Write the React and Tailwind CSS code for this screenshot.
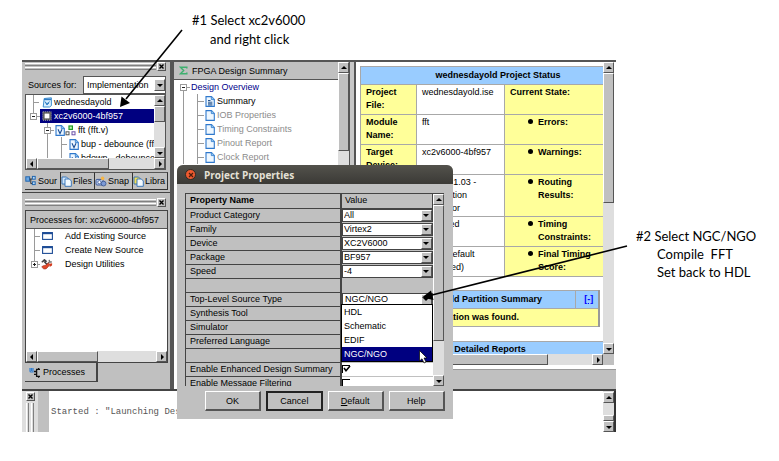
import { useState } from "react";
import clsx from "clsx";

const raised =
  "border border-t-white border-l-white border-b-[#555555] border-r-[#555555] bg-[#c0c0c0]";

const ARROWS = {
  up: "M1 5 L4 2 L7 5 Z",
  down: "M1 3 L4 6 L7 3 Z",
  left: "M5 1 L2 4 L5 7 Z",
  right: "M3 1 L6 4 L3 7 Z",
};

const ArrowButton = ({ dir, className }) => (
  <button
    type="button"
    aria-label={`Scroll ${dir}`}
    className={clsx(
      "flex size-[11px] shrink-0 items-center justify-center",
      raised,
      className,
    )}
  >
    <svg viewBox="0 0 8 8" className="size-2">
      <path d={ARROWS[dir]} fill="#000" />
    </svg>
  </button>
);

const VScroll = ({ thumb, className }) => (
  <div className={clsx("flex w-[11px] shrink-0 flex-col bg-[#dedede]", className)}>
    <ArrowButton dir="up" />
    <div className="flex min-h-0 flex-1 flex-col">
      <div className={clsx(raised, thumb)} />
    </div>
    <ArrowButton dir="down" />
  </div>
);

const HScroll = ({ thumb }) => (
  <div className="flex h-[11px] shrink-0 bg-[#dedede]">
    <ArrowButton dir="left" />
    <div className="flex flex-1">
      <div className={clsx(raised, thumb)} />
    </div>
    <ArrowButton dir="right" />
  </div>
);

const CloseBox = () => (
  <button
    type="button"
    aria-label="Close panel"
    className={clsx("flex size-[9px] shrink-0 items-center justify-center", raised)}
  >
    <svg viewBox="0 0 7 7" className="size-[7px]">
      <path d="M1.5 1.5 L5.5 5.5 M5.5 1.5 L1.5 5.5" stroke="#000" strokeWidth="1.4" />
    </svg>
  </button>
);

const Grip = () => (
  <div className="flex h-[9px] items-center gap-px pr-1">
    <div className="flex flex-1 flex-col gap-px">
      <div className="h-[3px] border-t border-b border-t-white border-b-[#808080]" />
      <div className="h-[3px] border-t border-b border-t-white border-b-[#808080]" />
    </div>
    <CloseBox />
  </div>
);

/* ---------- icons ---------- */

const PageIcon = ({ letter, lines }) => (
  <svg viewBox="0 0 10 11" className="h-[11px] w-[10px] shrink-0">
    <path d="M1 .6 H6.5 L9.3 3.4 V10.4 H1 Z" fill="#eef7ff" stroke="#2f78cc" strokeWidth="1.1" />
    <path d="M6.3 .6 V3.6 H9.3" fill="#8cc4ee" stroke="#2f78cc" strokeWidth=".8" />
    {letter && <path d="M3 4.3 L5 8.6 L7 4.3" fill="none" stroke="#1c4f96" strokeWidth="1.1" />}
    {lines && <path d="M3 4.5 H5.5 M3 6.2 H7.4 M3 7.8 H7.4 M3 9 H7.4" stroke="#29568e" strokeWidth="1" />}
  </svg>
);

const ProjectIcon = () => (
  <svg viewBox="0 0 10 11" className="h-[11px] w-[10px] shrink-0">
    <path d="M2.2 1.5 L9.4 .8 V8.6 L7.6 10 H1.2 Z" fill="#d9efff" stroke="#3f8ed0" />
    <path d="M2 2.4 H9" stroke="#2f7cc4" strokeWidth="1.6" />
    <path d="M3 4.5 L5 8 L7.4 4.5 M4 6.3 H7" fill="none" stroke="#2f7cc4" />
  </svg>
);

const ChipIcon = () => (
  <svg viewBox="0 0 10 10" className="size-[10px] shrink-0">
    <rect x=".8" y=".8" width="8.4" height="8.4" fill="#555" stroke="#aaa" strokeDasharray="1 1" />
    <rect x="2.6" y="2.6" width="4.8" height="4.8" fill="#fff" />
  </svg>
);

const HierarchyIcon = () => (
  <svg viewBox="0 0 11 11" className="size-[11px] shrink-0" fill="none">
    <rect x="4" y="1" width="3.4" height="3.4" fill="#bdf5b0" stroke="#1f9a23" strokeWidth="1.2" />
    <rect x="1" y="6.8" width="3" height="3" stroke="#555" />
    <rect x="7" y="6.8" width="3" height="3" stroke="#6b4fa8" />
  </svg>
);

const WindowIcon = () => (
  <svg viewBox="0 0 11 8" className="h-2 w-[11px] shrink-0">
    <rect x=".6" y=".6" width="9.8" height="6.8" fill="#fff" stroke="#1d4c96" strokeWidth="1.1" />
    <path d="M.6 1.3 H10.4" stroke="#1d4c96" strokeWidth="1.8" />
  </svg>
);

const ToolsIcon = () => (
  <svg viewBox="0 0 12 11" className="h-[11px] w-3 shrink-0">
    <path d="M.8 3.2 L3.4 .8 L5 2.2 L3.6 3 L6 5.4" fill="none" stroke="#444" strokeWidth="1.5" />
    <path d="M8.2 .8 L8.6 2.8 L10.8 3 M8.6 2.8 L6.4 5" fill="none" stroke="#777" strokeWidth="1.4" />
    <path d="M1 7.6 C1.4 6.6 3.4 6.6 4.6 6.2 L7.4 4 L9 5.6 L6 9 C5 10.4 1.4 10.6 1 7.6 Z" fill="#e2492a" stroke="#96230f" strokeWidth=".6" />
    <path d="M8.6 4.8 L11.2 4.2 L11 6.4 L8.6 8 Z" fill="#d23c20" />
  </svg>
);

const SourcesIcon = () => (
  <svg viewBox="0 0 12 11" className="h-[11px] w-3 shrink-0" fill="none">
    <rect x=".8" y="1.8" width="3.8" height="4.4" fill="#6aa8e6" stroke="#2366ae" />
    <path d="M4.6 4 H7 M5.8 4 V8.6 H7" stroke="#333" />
    <rect x="7.4" y="1.4" width="2.8" height="2.8" fill="#b8daf7" stroke="#2366ae" />
    <rect x="7.4" y="6.8" width="2.8" height="2.8" fill="#b8daf7" stroke="#2366ae" />
  </svg>
);

const StackIcon = ({ fill }) => (
  <svg viewBox="0 0 11 11" className="size-[11px] shrink-0">
    <path d="M1 1 H5.5 L7 2.5 V8 H1 Z" fill={fill} stroke="#2c6db4" strokeWidth=".9" />
    <path d="M4 3 H8.4 L10.3 5 V10.3 H4 Z" fill="#f3faff" stroke="#2c6db4" strokeWidth=".9" />
  </svg>
);

const SnapIcon = () => (
  <svg viewBox="0 0 12 11" className="h-[11px] w-3 shrink-0">
    <rect x="1" y="3.4" width="7" height="5.6" rx="1" fill="#b7c9ea" stroke="#3c5a9c" />
    <circle cx="4.4" cy="6.2" r="1.6" fill="#fff" stroke="#3c5a9c" strokeWidth=".8" />
    <circle cx="8.6" cy="7.6" r="2.4" fill="#7c9ad6" stroke="#35528e" strokeWidth=".8" />
    <circle cx="7.6" cy="2.4" r="1.8" fill="#f6b545" />
  </svg>
);

const ProcessIcon = () => (
  <svg viewBox="0 0 12 11" className="h-[11px] w-3 shrink-0" fill="none">
    <path d="M1 1 V4 Q1 5 2 5 H4 V1 M2.5 1 V4" stroke="#2f7dd0" strokeWidth="1.2" />
    <path d="M11 2.4 H7.6 V9.4 H11 M5 4.5 H7.6 M5 7.4 H7.6 M9.6 1 V2.4 M9.6 9.4 V10.8" stroke="#111" strokeWidth="1.3" />
  </svg>
);

const SigmaIcon = () => (
  <svg viewBox="0 0 9 9" className="size-[9px] shrink-0" fill="none">
    <path d="M7.8 2.6 V1.2 H1.4 L4.6 4.5 L1.4 7.8 H7.8 V6.4" stroke="#3fb070" strokeWidth="1.5" />
  </svg>
);

// guide lines of one tree row, 14px high; box is the x of an expander
const Guides = ({ width, d, box, plus }) => (
  <svg width={width} height="14" className="shrink-0" fill="none">
    <path d={d} stroke="#9a9a9a" />
    {box !== undefined && (
      <>
        <rect x={box - 3} y="4.5" width="6" height="6" fill="#fff" stroke="#9a9a9a" />
        <path d={`M${box - 1.5} 7.5 h3`} stroke="#222" />
        {plus && <path d={`M${box} 6 v3`} stroke="#222" />}
      </>
    )}
  </svg>
);

const Row = ({ guides, children, className }) => (
  <li className="flex h-[14px] shrink-0 items-center whitespace-nowrap">
    <Guides {...guides} />
    <span className={clsx("flex h-[14px] flex-1 items-center gap-0.5", className)}>
      {children}
    </span>
  </li>
);

/* ---------- left column ---------- */

const tabs = [
  { label: "Sour", icon: <SourcesIcon />, width: "w-9", active: true },
  { label: "Files", icon: <StackIcon fill="#cfe6fb" />, width: "w-[34px]" },
  { label: "Snap", icon: <SnapIcon />, width: "w-[38px]" },
  { label: "Libra", icon: <StackIcon fill="#f5df57" />, width: "w-[35px]" },
];

const SourcesPanel = () => (
  <section className="flex h-[131px] flex-col border-b border-[#444444] pl-[3px]">
    <Grip />
    <div className="mt-1 flex h-[19px] items-center pl-[3px]">
      <label htmlFor="sources" className="w-[55px] shrink-0">
        Sources for:
      </label>
      <div className="relative mr-1 flex h-[18px] flex-1 border border-[#555555] bg-white">
        <select id="sources" className="w-full appearance-none pl-[3px] outline-none">
          <option>Implementation</option>
        </select>
        <ArrowButton dir="down" className="pointer-events-none absolute top-0.5 right-0 h-3" />
      </div>
    </div>
    <div className="mr-1 flex h-[76px] flex-col border border-[#555555] bg-white">
      <div className="flex min-h-0 flex-1">
        <ul className="min-w-0 flex-1 overflow-hidden">
          <Row guides={{ width: 16, d: "M7.5 0 V14 M7.5 7.5 H13" }}>
            <ProjectIcon /> wednesdayold
          </Row>
          <Row
            guides={{ width: 14, d: "M7.5 0 V7 M7.5 7.5 H14", box: 7.5 }}
            className="bg-[#000080] pl-0.5 text-white"
          >
            <ChipIcon /> xc2v6000-4bf957
          </Row>
          <Row guides={{ width: 29, d: "M21.5 0 V14 M21.5 7.5 H28", box: 21.5 }}>
            <span className="flex">
              <PageIcon letter />
              <HierarchyIcon />
            </span>
            fft (fft.v)
          </Row>
          <Row guides={{ width: 43, d: "M21.5 0 V14 M35.5 0 V14 M35.5 7.5 H41" }}>
            <PageIcon letter /> bup - debounce (ff
          </Row>
          <Row guides={{ width: 43, d: "M21.5 0 V14 M35.5 0 V14 M35.5 7.5 H41" }}>
            <PageIcon letter /> bdown - debounce
          </Row>
        </ul>
        <VScroll thumb="h-4" />
      </div>
      <HScroll thumb="w-[72px]" />
    </div>
    <div className="mt-0.5 mr-0.5 flex h-[18px]" role="tablist">
      {tabs.map((tab) => (
        <button
          key={tab.label}
          type="button"
          role="tab"
          aria-selected={!!tab.active}
          className={clsx(
            "flex h-full shrink-0 items-center gap-px border-r border-b border-[#333333]",
            tab.width,
            !tab.active && "border-t border-t-[#555555]",
          )}
        >
          {tab.icon}
          {tab.label}
        </button>
      ))}
    </div>
  </section>
);

const ProcessesPanel = () => (
  <section className="flex flex-1 flex-col pt-[5px] pl-[3px]">
    <Grip />
    <div className="mt-[3px] mr-0.5 flex h-[153px] flex-col border border-[#444444] bg-white">
      <h2 className="flex h-[18px] items-center border-b border-[#555555] bg-[#c0c0c0] pl-1 whitespace-nowrap">
        Processes for: xc2v6000-4bf957
      </h2>
      <ul className="flex-1">
        <Row guides={{ width: 16, d: "M8.5 0 V14 M8.5 7.5 H14" }} className="gap-3">
          <WindowIcon /> Add Existing Source
        </Row>
        <Row guides={{ width: 16, d: "M8.5 0 V14 M8.5 7.5 H14" }} className="gap-3">
          <WindowIcon /> Create New Source
        </Row>
        <Row guides={{ width: 15, d: "M8.5 0 V7 M8.5 7.5 H14", box: 8.5, plus: true }} className="gap-3">
          <ToolsIcon /> Design Utilities
        </Row>
      </ul>
      <HScroll thumb="w-[61px]" />
    </div>
    <div>
      <button
        type="button"
        className="flex h-[19px] w-[73px] items-center gap-0.5 border-r-2 border-b border-[#444444] pl-1"
      >
        <ProcessIcon />
        Processes
      </button>
    </div>
  </section>
);

/* ---------- summary tree ---------- */

const reports = ["IOB Properties", "Timing Constraints", "Pinout Report", "Clock Report"];

const SummaryTree = () => (
  <section className="flex w-[180px] shrink-0 border-r border-l-4 border-[#555555] bg-white">
    <div className="min-w-0 flex-1">
      <h2 className="flex h-[18px] items-center gap-1 border-b border-[#555555] bg-[#c0c0c0] pl-[5px]">
        <SigmaIcon /> FPGA Design Summary
      </h2>
      <ul className="text-[#8c8c8c]">
        <Row guides={{ width: 17, d: "M9.5 7 V14 M10 7.5 H16", box: 9.5 }} className="text-[#00008b]">
          Design Overview
        </Row>
        <Row guides={{ width: 31, d: "M9.5 0 V14 M23.5 0 V14 M23.5 7.5 H30" }} className="text-black">
          <PageIcon lines /> Summary
        </Row>
        {reports.map((name) => (
          <Row key={name} guides={{ width: 31, d: "M9.5 0 V14 M23.5 0 V14 M23.5 7.5 H30" }}>
            <PageIcon /> {name}
          </Row>
        ))}
      </ul>
    </div>
    <VScroll thumb="h-[78px]" />
  </section>
);

/* ---------- report ---------- */

const status = [
  ["Project File:", "wednesdayold.ise", "Current State:"],
  ["Module Name:", "fft", "Errors:"],
  ["Target Device:", "xc2v6000-4bf957", "Warnings:"],
  ["Product Version:", "ISE, 11.1.03 - Foundation Simulator", "Routing Results:"],
  ["Design Goal:", "Balanced", "Timing Constraints:"],
  ["Design Strategy:", "Xilinx Default (unlocked)", "Final Timing Score:"],
];

const cell = "border border-[#a8a8a8] py-px pr-0.5 pl-[5px] align-top";

const Report = () => (
  <section className="flex min-w-0 flex-1 flex-col border-l-2 border-[#555555] bg-white">
    <div className="flex h-[292px]">
      <div className="min-w-0 flex-1 overflow-hidden pt-1 pl-1 leading-[13px]">
        <table className="w-[276px] table-fixed border-collapse">
          <colgroup>
            <col className="w-14" />
            <col className="w-[88px]" />
            <col />
          </colgroup>
          <thead>
            <tr className="h-[18px] bg-[#99ccff]">
              <th colSpan={3} className="border border-[#a8a8a8]">
                wednesdayold Project Status
              </th>
            </tr>
          </thead>
          <tbody>
            {status.map(([name, value, label], i) => (
              <tr key={name} className="h-[30px]">
                <th className={clsx(cell, "bg-[#ffff99] text-left")}>{name}</th>
                <td className={cell}>{value}</td>
                <td className={clsx(cell, "bg-[#ffff99] font-bold")}>
                  {i === 0 ? (
                    label
                  ) : (
                    <ul className="w-[90px] pl-[18px]">
                      <li className="flex gap-[5px] before:mt-[3px] before:size-[5px] before:shrink-0 before:rounded-full before:bg-black">
                        {label}
                      </li>
                    </ul>
                  )}
                </td>
              </tr>
            ))}
          </tbody>
        </table>

        <table className="mt-[13px] w-[240px] border-collapse border-r-2 border-r-[#999999]">
          <tbody>
            <tr className="h-[18px] bg-[#99ccff]">
              <th className="border border-[#a8a8a8] pl-1">wednesdayold Partition Summary</th>
              <th className="w-6 border border-[#a8a8a8] pl-1">
                <a href="#partition" className="text-[#0000ff] underline">
                  [-]
                </a>
              </th>
            </tr>
            <tr className="h-[18px] bg-[#ffff99]">
              <td colSpan={2} className="border border-[#a8a8a8] px-1.5 font-bold">
                No partition information was found.
              </td>
            </tr>
          </tbody>
        </table>

        <h3 className="mt-[14px] h-[18px] w-[260px] border border-[#a8a8a8] bg-[#99ccff] pt-px text-center font-bold">
          Detailed Reports
        </h3>
      </div>
      <VScroll thumb="h-[130px]" className="mr-0.5" />
    </div>
    <div className="flex pr-0.5">
      <div className="flex-1">
        <HScroll thumb="w-[181px]" />
      </div>
      <div className="w-[11px] bg-[#c0c0c0]" />
    </div>
    <div className="mt-1 flex-1 border-t border-[#999999] bg-[#c0c0c0]" />
  </section>
);

/* ---------- console ---------- */

const Console = () => (
  <section className="flex h-[43px] border-t-2 border-[#444444] bg-white">
    <div className="flex w-4 flex-col items-center bg-[#dedede] pt-px">
      <CloseBox />
      <div className="mt-0.5 flex flex-1 gap-0.5">
        <div className="w-[3px] border-r border-l border-r-[#808080] border-l-white" />
        <div className="w-[3px] border-r border-l border-r-[#808080] border-l-white" />
      </div>
    </div>
    <div className="w-[11px] bg-[#c0c0c0]" />
    <p className="flex-1 pt-[15px] pl-0.5 font-['Liberation_Mono',monospace] text-[#555555]">
      Started : "Launching Design Summary".
    </p>
    <div className="flex border-r-2 border-[#333333]">
      <div className="flex w-[11px] flex-col bg-[#dedede] pt-px">
        <ArrowButton dir="up" />
        <div className="flex-1" />
        <div className={clsx("h-1.5", raised)} />
        <ArrowButton dir="down" />
      </div>
    </div>
  </section>
);

/* ---------- dialog ---------- */

const properties = [
  { name: "Product Category", value: "All" },
  { name: "Family", value: "Virtex2" },
  { name: "Device", value: "XC2V6000" },
  { name: "Package", value: "BF957" },
  { name: "Speed", value: "-4" },
  { name: "" },
  { name: "Top-Level Source Type", value: "NGC/NGO" },
  { name: "Synthesis Tool" },
  { name: "Simulator" },
  { name: "Preferred Language" },
  { name: "" },
  { name: "Enable Enhanced Design Summary", check: true },
  { name: "Enable Message Filtering", check: false },
];

const sourceTypes = ["HDL", "Schematic", "EDIF", "NGC/NGO"];

const PropertyValue = ({ prop }) => {
  const [checked, setChecked] = useState(prop.check);

  if (prop.value) {
    return (
      <div className="relative flex h-[13px] border border-[#444444] bg-white">
        <select
          aria-label={prop.name}
          className={clsx(
            "w-full appearance-none leading-[11px] outline-none",
            prop.value === "NGC/NGO" ? "pl-0.5" : "pl-px",
          )}
        >
          <option>{prop.value}</option>
        </select>
        <ArrowButton dir="down" className="pointer-events-none absolute top-0 right-0" />
      </div>
    );
  }
  if (prop.check !== undefined) {
    return (
      <label className="flex h-[13px] items-center bg-white">
        <input
          type="checkbox"
          aria-label={prop.name}
          checked={checked}
          onChange={(e) => setChecked(e.target.checked)}
          className="peer size-2 appearance-none border-t border-l border-black"
        />
        <svg viewBox="0 0 8 8" className="-ml-[7px] hidden size-2 peer-checked:block">
          <path d="M1 3 L3 5.8 L7 1" fill="none" stroke="#000" strokeWidth="1.6" />
        </svg>
      </label>
    );
  }
  return null;
};

const Dialog = () => (
  <div
    role="dialog"
    aria-label="Project Properties"
    className="absolute top-[165px] left-[177px] z-10 w-[276px] rounded-t-md bg-[#c0c0c0]"
  >
    <div className="flex h-[19px] items-center gap-2 rounded-t-md bg-linear-to-b from-[#53524c] to-[#3b3a36] pl-2">
      <button
        type="button"
        aria-label="Close"
        className="flex size-[11px] items-center justify-center rounded-full border border-[#2f2a26] bg-[#ee5a2f]"
      >
        <svg viewBox="0 0 6 6" className="size-1.5">
          <path d="M1 1 L5 5 M5 1 L1 5" stroke="#4a1c0c" strokeWidth="1.2" />
        </svg>
      </button>
      <h2 className="font-['Open_Sans',sans-serif] text-[10px] font-bold text-[#e4e0d6]">
        Project Properties
      </h2>
    </div>

    <div className="mt-[9px] mr-[9px] ml-2 flex h-[193px] border-t border-l border-[#444444]">
      <div className="relative min-w-0 flex-1">
        <div className="h-48 overflow-hidden">
          <table className="w-full table-fixed border-collapse">
            <thead>
              <tr className="h-[14px]">
                <th className="w-[155px] border-r-2 border-b border-[#444444] p-0 pl-1 text-left leading-[13px]">
                  Property Name
                </th>
                <th className="border-r border-b border-[#444444] p-0 pl-[3px] text-left leading-[13px] font-normal">
                  Value
                </th>
              </tr>
            </thead>
            <tbody>
              {properties.map((prop, i) => (
                <tr key={i} className="h-[14px]">
                  <td className="border-r-2 border-b border-[#444444] p-0 pl-1 leading-[13px] whitespace-nowrap">
                    {prop.name}
                  </td>
                  <td className="p-0">
                    <PropertyValue prop={prop} />
                  </td>
                </tr>
              ))}
            </tbody>
          </table>
        </div>
        {/* open source type list */}
        <ul
          role="listbox"
          aria-label="Top-Level Source Type"
          className="absolute top-[110px] right-0 w-[92px] border border-black bg-white"
        >
          {sourceTypes.map((type) => (
            <li
              key={type}
              role="option"
              aria-selected={type === "NGC/NGO"}
              className="h-[14px] pl-0.5 leading-[14px] aria-selected:bg-[#000080] aria-selected:text-white"
            >
              {type}
            </li>
          ))}
        </ul>
      </div>
      <VScroll thumb="h-[136px]" />
    </div>

    <div className="mt-[5px] mr-2 ml-7 grid grid-cols-4 gap-[5px] pb-2">
      <button type="button" className={clsx("h-5 border-r-2 border-b-2", raised)}>
        OK
      </button>
      <button type="button" className="h-5 border-2 border-[#222222]">
        Cancel
      </button>
      <button type="button" className={clsx("h-5 border-r-2 border-b-2", raised)}>
        <span className="underline">D</span>efault
      </button>
      <button type="button" className={clsx("h-5 border-r-2 border-b-2", raised)}>
        Help
      </button>
    </div>
  </div>
);

const note = "font-['Lato',sans-serif] text-[13px] whitespace-pre text-black";

// arrows from the notes and the mouse pointer, drawn over the windows
const Overlay = () => (
  <svg
    width="779"
    height="461"
    className="pointer-events-none absolute top-0 left-0 z-20"
  >
    <path d="M182 30 L126 99" stroke="#000" strokeWidth="1.6" />
    <path d="M120 107 L121.5 96.5 L130 103 Z" />
    <path d="M627 246 L432 295" stroke="#000" strokeWidth="1.6" />
    <path d="M422 297.5 L431 290.5 L433.5 300 Z" />
    <path
      d="M419.5 350.5 V361 L422 358.8 L424 363 L426 362 L424 358 H427 Z"
      fill="#fff"
      stroke="#000"
      strokeWidth=".7"
    />
  </svg>
);

const App = () => (
  <div className="relative min-h-screen overflow-hidden bg-white font-['Liberation_Sans',Arial,sans-serif] text-[9px] leading-[12px] text-black">
    <header className={clsx(note, "h-[60px] pt-[11px] pl-48 leading-[19px]")}>
      <p>#1 Select xc2v6000</p>
      <p className="pl-[18px]">and right click</p>
    </header>

    <div className="flex">
      <main className="ml-[22px] min-w-0 flex-1">
        <div className="flex h-[329px] border-t-2 border-[#555555] bg-[#c0c0c0]">
          <div className="flex w-[148px] shrink-0 flex-col">
            <SourcesPanel />
            <ProcessesPanel />
          </div>
          <SummaryTree />
          <div className="w-1 shrink-0 bg-[#c8c8c8]" />
          <Report />
        </div>
        <Console />
      </main>

      <aside className={clsx(note, "w-[163px] shrink-0 pt-[167px] pl-5 leading-[18px]")}>
        <p>#2 Select NGC/NGO</p>
        <p className="pl-[21px]">Compile  FFT</p>
        <p className="pl-[21px]">Set back to HDL</p>
      </aside>
    </div>

    <Dialog />
    <Overlay />
  </div>
);

export default App;
